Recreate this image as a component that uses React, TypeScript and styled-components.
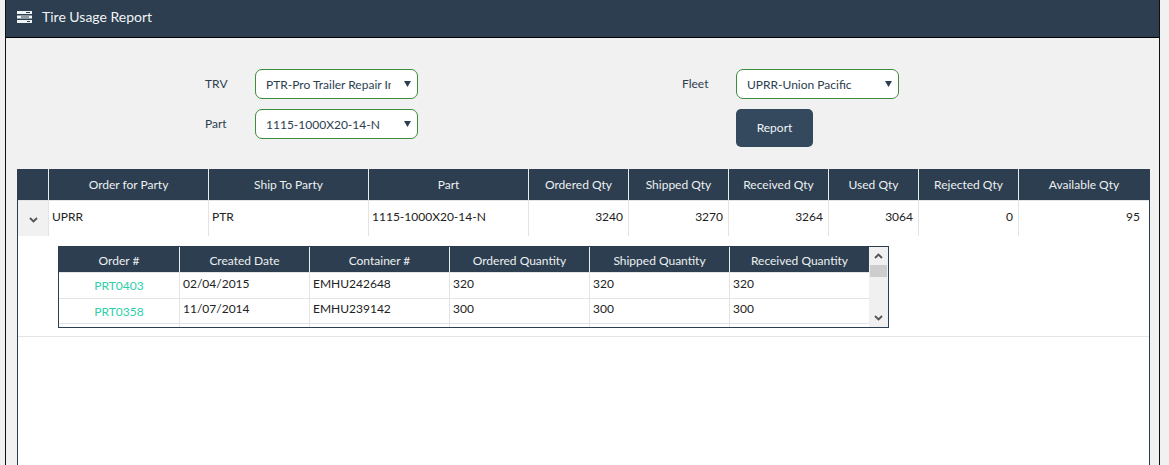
import React from "react";
import styled, { createGlobalStyle } from "styled-components";

const GlobalStyle = createGlobalStyle`
  html, body {
    margin: 0;
    height: 100%;
    overflow: hidden;
    background: #f1f1f1;
    font-family: Lato, "Liberation Sans", sans-serif;
    font-size: 12px;
    color: #2c3e50;
  }
`;

const Panel = styled.div`
  margin: 0 9px 0 5px;
  height: 465px;
  border-left: 1px solid #111;
  border-right: 1px solid #111;
  display: flex;
  flex-direction: column;
`;

const TitleBar = styled.div`
  height: 37px;
  flex: none;
  box-sizing: border-box;
  background: #2c3e50;
  display: flex;
  align-items: center;
  gap: 10px;
  padding: 0 0 4px 11px;
  color: #f1f4f6;
  font-size: 14px;
`;

const TitleRule = styled.div`
  height: 1px;
  flex: none;
  background: #000;
`;

const FormArea = styled.div`
  flex: none;
  display: flex;
  height: 131px;
  box-sizing: border-box;
  padding: 31px 0 0 199px;
`;

const FormColumn = styled.div<{ $width: number }>`
  width: ${(p) => p.$width}px;
  display: flex;
  flex-direction: column;
  gap: 10px;
`;

const Field = styled.div`
  display: flex;
  align-items: center;
  height: 30px;
`;

const Label = styled.label<{ $width: number }>`
  width: ${(p) => p.$width}px;
  margin-top: -2px;
`;

const SelectWrap = styled.div`
  position: relative;
  width: 163px;
  height: 30px;
`;

const Select = styled.select`
  appearance: none;
  width: 100%;
  height: 100%;
  box-sizing: border-box;
  border: 1px solid #3d8b3d;
  border-radius: 7px;
  background: #fff;
  color: #2c3e50;
  font: 12px Lato, sans-serif;
  padding: 0 26px 0 10px;
  outline: none;
`;

const SelectArrow = styled.svg`
  position: absolute;
  top: 12px;
  right: 7px;
  pointer-events: none;
`;

const ReportButton = styled.button`
  width: 77px;
  height: 38px;
  margin-left: 54px;
  padding: 0 0 2px;
  border: none;
  border-radius: 5px;
  background: #34495e;
  color: #f1f4f6;
  font: 12px Lato, sans-serif;
`;

const Grid = styled.div`
  flex: 1;
  margin: 0 9px 0 11px;
  background: #fff;
  border-left: 1px solid #2c3e50;
  border-right: 1px solid #2c3e50;
`;

const mainColumns = "30px 160px 160px 160px 100px 100px 100px 90px 100px 1fr";
const detailColumns = "120px 130px 140px 140px 140px 140px";

const HeaderRow = styled.div<{ $columns: string; $height: number }>`
  display: grid;
  grid-template-columns: ${(p) => p.$columns};
  height: ${(p) => p.$height}px;
  background: #2c3e50;
  border-bottom: 1px solid #e4e4e4;
  box-sizing: content-box;
`;

const HeaderCell = styled.div<{ $pad?: number; $first?: boolean }>`
  display: flex;
  align-items: center;
  justify-content: center;
  color: #ecf0f1;
  padding-top: ${(p) => p.$pad ?? 0}px;
  border-left: ${(p) => (p.$first ? "none" : "1px solid #e8ecef")};
`;

const BlankHeader = styled.div`
  background: #2c3e50;
`;

const MainRow = styled.div`
  display: grid;
  grid-template-columns: ${mainColumns};
  height: 35px;
`;

const ExpandCell = styled.div`
  background: #f1f1f1;
  display: flex;
  align-items: center;
  justify-content: center;
  padding-top: 3px;
`;

const Cell = styled.div<{ $right?: boolean; $endPad?: number }>`
  border-left: 1px solid #e4e4e4;
  padding: 3px ${(p) => p.$endPad ?? 5}px 0 3px;
  color: #222;
  line-height: 26px;
  text-align: ${(p) => (p.$right ? "right" : "left")};
`;

const DetailArea = styled.div`
  height: 101px;
  box-sizing: border-box;
  padding: 10px 0 0 40px;
  border-bottom: 1px solid #e4e4e4;
`;

const DetailBox = styled.div`
  width: 831px;
  height: 82px;
  box-sizing: border-box;
  border: 1px solid #2c3e50;
  display: flex;
  overflow: hidden;
`;

const DetailTable = styled.div`
  flex: 1;
  overflow: hidden;
`;

const DetailRow = styled.div`
  display: grid;
  grid-template-columns: ${detailColumns};
  height: 24.5px;
  border-bottom: 1px solid #e4e4e4;
  box-sizing: content-box;
  &:nth-child(2) > div {
    padding-top: 1px;
  }
`;

const DetailCell = styled.div`
  border-left: 1px solid #e4e4e4;
  padding: 0 3px;
  color: #222;
  line-height: 20px;
`;

const LinkCell = styled.a`
  color: #2dcfa9;
  text-align: center;
  line-height: 25px;
  text-decoration: none;
`;

const ScrollBar = styled.div`
  width: 19px;
  flex: none;
  background: #f0f0f0;
  display: flex;
  flex-direction: column;
  align-items: center;
`;

const ScrollButton = styled.div`
  height: 18px;
  flex: none;
  width: 100%;
  display: flex;
  align-items: center;
  justify-content: center;
`;

const ScrollThumb = styled.div`
  width: 17px;
  height: 12px;
  flex: none;
  background: #cdcdcd;
`;

const ScrollSpace = styled.div`
  flex: 1;
`;

const Chevron = ({ up, color }: { up?: boolean; color: string }) => (
  <svg width={9} height={6} viewBox="0 0 9 6">
    <path
      d={up ? "M1 5 L4.5 1.5 L8 5" : "M1 1 L4.5 4.5 L8 1"}
      fill="none"
      stroke={color}
      strokeWidth={1.9}
    />
  </svg>
);

const TitleIcon = () => (
  <svg width="15" height="12" viewBox="0 0 15 12">
    <rect x="0" y="0" width="15" height="3" fill="#f1f4f6" />
    <rect x="0" y="4.5" width="15" height="3" fill="#f1f4f6" />
    <rect x="0" y="9" width="15" height="3" fill="#f1f4f6" />
    <rect x="9" y="1" width="4" height="1" fill="#2c3e50" />
    <rect x="4" y="5.5" width="8" height="1" fill="#2c3e50" />
    <rect x="10" y="10" width="3" height="1" fill="#2c3e50" />
  </svg>
);

const Dropdown = ({ label }: { label: string }) => (
  <SelectWrap>
    <Select defaultValue={label}>
      <option value={label}>{label}</option>
    </Select>
    <SelectArrow width="7" height="6" viewBox="0 0 7 6">
      <path d="M0 0 H7 L3.5 6 Z" fill="#2c3e50" />
    </SelectArrow>
  </SelectWrap>
);

const mainHeaders = [
  "Order for Party",
  "Ship To Party",
  "Part",
  "Ordered Qty",
  "Shipped Qty",
  "Received Qty",
  "Used Qty",
  "Rejected Qty",
  "Available Qty",
];

const detailHeaders = [
  "Order #",
  "Created Date",
  "Container #",
  "Ordered Quantity",
  "Shipped Quantity",
  "Received Quantity",
];

// the third row is scrolled out of view, only its top edge shows
const orders = [
  { order: "PRT0403", date: "02/04/2015", container: "EMHU242648", qty: "320" },
  { order: "PRT0358", date: "11/07/2014", container: "EMHU239142", qty: "300" },
  { order: "", date: "", container: "", qty: "" },
];

export default function App() {
  return (
    <>
      <GlobalStyle />
      <Panel>
        <TitleBar>
          <TitleIcon />
          Tire Usage Report
        </TitleBar>
        <TitleRule />
        <FormArea>
          <FormColumn $width={477}>
            <Field>
              <Label $width={50}>TRV</Label>
              <Dropdown label="PTR-Pro Trailer Repair Inc" />
            </Field>
            <Field>
              <Label $width={50}>Part</Label>
              <Dropdown label="1115-1000X20-14-N" />
            </Field>
          </FormColumn>
          <FormColumn $width={300}>
            <Field>
              <Label $width={54}>Fleet</Label>
              <Dropdown label="UPRR-Union Pacific" />
            </Field>
            <ReportButton>Report</ReportButton>
          </FormColumn>
        </FormArea>
        <Grid>
          <HeaderRow $columns={mainColumns} $height={31}>
            <BlankHeader />
            {mainHeaders.map((h) => (
              <HeaderCell key={h}>{h}</HeaderCell>
            ))}
          </HeaderRow>
          <MainRow>
            <ExpandCell>
              <Chevron color="#555" />
            </ExpandCell>
            <Cell>UPRR</Cell>
            <Cell>PTR</Cell>
            <Cell>1115-1000X20-14-N</Cell>
            <Cell $right>3240</Cell>
            <Cell $right>3270</Cell>
            <Cell $right>3264</Cell>
            <Cell $right>3064</Cell>
            <Cell $right>0</Cell>
            <Cell $right $endPad={9}>95</Cell>
          </MainRow>
          <DetailArea>
            <DetailBox>
              <DetailTable>
                <HeaderRow $columns={detailColumns} $height={25}>
                  {detailHeaders.map((h, i) => (
                    <HeaderCell key={h} $pad={2} $first={i === 0}>
                      {h}
                    </HeaderCell>
                  ))}
                </HeaderRow>
                {orders.map((o, i) => (
                  <DetailRow key={i}>
                    <LinkCell href="#">{o.order}</LinkCell>
                    <DetailCell>{o.date}</DetailCell>
                    <DetailCell>{o.container}</DetailCell>
                    <DetailCell>{o.qty}</DetailCell>
                    <DetailCell>{o.qty}</DetailCell>
                    <DetailCell>{o.qty}</DetailCell>
                  </DetailRow>
                ))}
              </DetailTable>
              <ScrollBar>
                <ScrollButton>
                  <Chevron up color="#555" />
                </ScrollButton>
                <ScrollThumb />
                <ScrollSpace />
                <ScrollButton>
                  <Chevron color="#555" />
                </ScrollButton>
              </ScrollBar>
            </DetailBox>
          </DetailArea>
        </Grid>
      </Panel>
    </>
  );
}
